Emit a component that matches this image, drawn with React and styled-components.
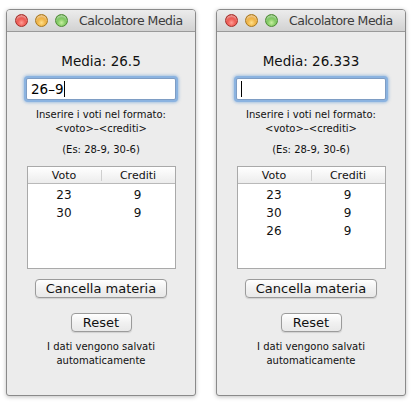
import React from "react";
import styled, { createGlobalStyle } from "styled-components";

const GS = createGlobalStyle`
  html, body { margin: 0; padding: 0; background: #fff; }
  body { font-family: "DejaVu Sans", "Liberation Sans", sans-serif; }
  * { box-sizing: border-box; }
`;

const Page = styled.div`
  display: flex;
  gap: 20px;
  padding: 9px 0 0 6px;
  width: 416px;
  height: 403px;
`;

const Win = styled.div`
  width: 190px;
  height: 387px;
  display: flex;
  flex-direction: column;
  border: 1px solid #8a8a8a;
  border-radius: 4px 4px 3px 3px;
  background: #ececec;
  box-shadow: 0 1px 4px rgba(0, 0, 0, 0.25);
  overflow: hidden;
`;

const TitleBar = styled.div`
  height: 22px;
  flex: none;
  display: flex;
  align-items: center;
  padding: 0 0 0 8px;
  gap: 7px;
  background: linear-gradient(#ececec, #d2d2d2);
  border-bottom: 1px solid #9a9a9a;
`;

const Light = styled.span`
  width: 13px;
  height: 13px;
  border-radius: 50%;
  flex: none;
  border: 1px solid ${(p) => p.$edge};
  background: radial-gradient(circle at 50% 70%, ${(p) => p.$hi} 0%, ${(p) => p.$c} 55%, ${(p) => p.$dk} 100%);
  box-shadow: inset 0 2px 2px rgba(255, 255, 255, 0.5);
`;

const Title = styled.span`
  margin-left: 4px;
  font-size: 12.5px;
  color: #3c3c3c;
  white-space: nowrap;
  letter-spacing: -0.5px;
`;

const Body = styled.div`
  flex: 1;
  display: flex;
  flex-direction: column;
  align-items: center;
  padding-top: 21px;
`;

const Media = styled.div`
  font-size: 13.5px;
  color: #111;
  line-height: 16px;
`;

const Field = styled.div`
  margin-top: 9px;
  width: 150px;
  height: 22px;
  background: #fff;
  border: 1px solid #7e9dc4;
  border-radius: 2px;
  box-shadow: 0 0 0 2px #8bb3e0, 0 0 3px 3px rgba(110, 160, 215, 0.55);
  display: flex;
  align-items: center;
  padding-left: 4px;
  font-size: 13.5px;
  color: #000;
`;

const Caret = styled.span`
  width: 1px;
  height: 16px;
  background: #000;
`;

const Hint = styled.div`
  margin-top: 8px;
  font-size: 10px;
  line-height: 14px;
  text-align: center;
  color: #111;
`;

const Example = styled.div`
  margin-top: 7px;
  font-size: 10px;
  line-height: 14px;
  color: #111;
`;

const Table = styled.div`
  margin-top: 9px;
  width: 149px;
  height: 103px;
  background: #fff;
  border: 1px solid #a9a9a9;
  display: flex;
  flex-direction: column;
`;

const Head = styled.div`
  height: 17px;
  display: grid;
  grid-template-columns: 73px 1fr;
  background: linear-gradient(#ffffff, #ececec);
  border-bottom: 1px solid #b9b9b9;
  font-size: 11px;
  color: #111;
`;

const HeadCell = styled.div`
  display: flex;
  align-items: center;
  justify-content: center;
  border-left: ${(p) => (p.$sep ? "1px solid #cfcfcf" : "none")};
  margin: ${(p) => (p.$sep ? "3px 0" : "0")};
  line-height: 11px;
`;

const Rows = styled.div`
  display: flex;
  flex-direction: column;
  padding-top: 2px;
`;

const Row = styled.div`
  height: 18px;
  display: grid;
  grid-template-columns: 73px 1fr;
  font-size: 12px;
  color: #111;
`;

const Cell = styled.div`
  display: flex;
  align-items: center;
  justify-content: center;
`;

const Btn = styled.button`
  margin-top: ${(p) => p.$mt}px;
  width: ${(p) => p.$w}px;
  height: 19px;
  border: 1px solid #9b9b9b;
  border-radius: 4px;
  background: linear-gradient(#ffffff, #f1f1f1 50%, #e8e8e8);
  box-shadow: 0 1px 1px rgba(0, 0, 0, 0.12);
  font-family: inherit;
  font-size: 13px;
  color: #111;
  padding: 0;
  line-height: 17px;
`;

const Note = styled.div`
  margin-top: 8px;
  font-size: 10px;
  line-height: 14px;
  text-align: center;
  color: #111;
`;

const lights = [
  { c: "#e8463f", hi: "#ff9d95", dk: "#b32019", edge: "#a4302b" },
  { c: "#eaa630", hi: "#ffe08a", dk: "#c27810", edge: "#a8791e" },
  { c: "#6cbd4e", hi: "#c8f0a2", dk: "#3e9128", edge: "#4f8c36" },
];

function Window({ media, value, rows }) {
  return (
    <Win>
      <TitleBar>
        {lights.map((l, i) => (
          <Light key={i} $c={l.c} $hi={l.hi} $dk={l.dk} $edge={l.edge} />
        ))}
        <Title>Calcolatore Media</Title>
      </TitleBar>
      <Body>
        <Media>Media: {media}</Media>
        <Field>
          {value}
          <Caret />
        </Field>
        <Hint>
          Inserire i voti nel formato:
          <br />
          &lt;voto&gt;–&lt;crediti&gt;
        </Hint>
        <Example>(Es: 28-9, 30-6)</Example>
        <Table>
          <Head>
            <HeadCell>Voto</HeadCell>
            <HeadCell $sep>Crediti</HeadCell>
          </Head>
          <Rows>
            {rows.map(([v, c], i) => (
              <Row key={i}>
                <Cell>{v}</Cell>
                <Cell>{c}</Cell>
              </Row>
            ))}
          </Rows>
        </Table>
        <Btn $w={132} $mt={10}>Cancella materia</Btn>
        <Btn $w={61} $mt={15}>Reset</Btn>
        <Note>
          I dati vengono salvati
          <br />
          automaticamente
        </Note>
      </Body>
    </Win>
  );
}

export default function App() {
  return (
    <>
      <GS />
      <Page>
        <Window media="26.5" value="26–9" rows={[["23", "9"], ["30", "9"]]} />
        <Window media="26.333" value="" rows={[["23", "9"], ["30", "9"], ["26", "9"]]} />
      </Page>
    </>
  );
}
